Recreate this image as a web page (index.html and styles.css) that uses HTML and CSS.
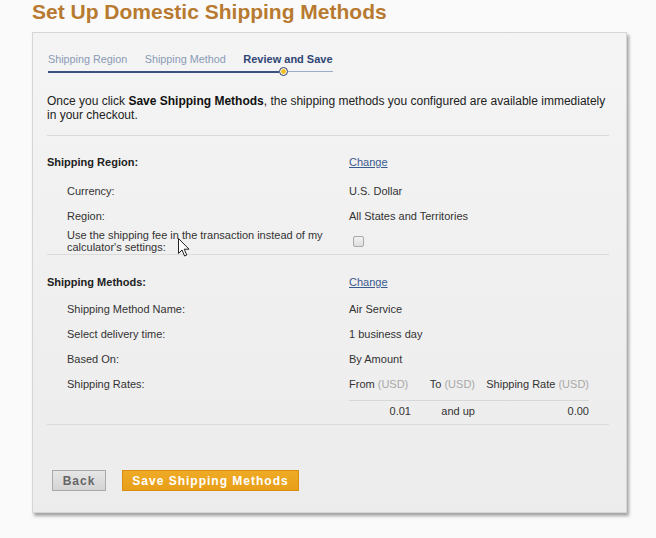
FILE: index.html
```html
<!DOCTYPE html>
<html>
<head>
<meta charset="utf-8">
<link rel="stylesheet" href="styles.css">
</head>
<body>
<h1 class="title">Set Up Domestic Shipping Methods</h1>
<div class="panel">
  <div class="steps">
    <div class="step-labels">
      <span class="step">Shipping Region</span>
      <span class="step">Shipping Method</span>
      <span class="step active">Review and Save</span>
    </div>
    <div class="progress"><span class="bar-done"></span><span class="dot"></span><span class="bar-todo"></span></div>
  </div>
  <p class="intro">Once you click <b>Save Shipping Methods</b>, the shipping methods you configured are available immediately in your checkout.</p>

  <section class="group">
    <div class="kv head"><span class="k">Shipping Region:</span><a class="v link" href="#">Change</a></div>
    <div class="kv row"><span class="k">Currency:</span><span class="v">U.S. Dollar</span></div>
    <div class="kv row"><span class="k">Region:</span><span class="v">All States and Territories</span></div>
    <div class="kv row-check"><span class="k">Use the shipping fee in the transaction instead of my calculator's settings:</span><span class="v"><span class="checkbox"></span></span></div>
  </section>

  <section class="group group-2">
    <div class="kv head"><span class="k">Shipping Methods:</span><a class="v link" href="#">Change</a></div>
    <div class="kv row"><span class="k">Shipping Method Name:</span><span class="v">Air Service</span></div>
    <div class="kv row"><span class="k">Select delivery time:</span><span class="v">1 business day</span></div>
    <div class="kv row"><span class="k">Based On:</span><span class="v">By Amount</span></div>
    <div class="kv row-rates"><span class="k">Shipping Rates:</span>
      <div class="v rates">
        <span class="th">From <em>(USD)</em></span>
        <span class="th">To <em>(USD)</em></span>
        <span class="th">Shipping Rate <em>(USD)</em></span>
        <span class="td">0.01</span>
        <span class="td">and up</span>
        <span class="td">0.00</span>
      </div>
    </div>
  </section>

  <div class="actions">
    <button class="btn btn-back">Back</button>
    <button class="btn btn-save">Save Shipping Methods</button>
  </div>
</div>

<svg class="cursor" width="13" height="20" viewBox="0 0 13 20"><path d="M0.5 0.5 L0.5 15.5 L4 12 L6.6 18 L8.8 17 L6.2 11.2 L11 11.2 Z" fill="#fff" stroke="#222" stroke-width="1" stroke-linejoin="round"/></svg>
</body>
</html>
```

FILE: styles.css
```css
* { box-sizing: border-box; }
html, body { margin: 0; padding: 0; }
body {
  background: #fafafa;
  font-family: "Liberation Sans", Arial, sans-serif;
  color: #333;
  width: 656px;
  height: 538px;
  overflow: hidden;
  position: relative;
}
.title {
  margin: 0 0 8px 32px;
  font-size: 21px;
  line-height: 24px;
  font-weight: bold;
  color: #b77a30;
}
.panel {
  margin-left: 32px;
  width: 595px;
  border: 1px solid #d6d6d6;
  background: linear-gradient(#f4f4f4, #ececec);
  padding: 19px 17px 21px 14px;
  box-shadow: 2px 3px 3px rgba(0,0,0,0.35);
  font-size: 11px;
}
.steps {
  display: flex;
  flex-direction: column;
  width: fit-content;
  margin-left: 1px;
}
.step-labels {
  display: flex;
  gap: 17.5px;
  font-size: 10.8px;
  line-height: 14px;
  color: #8a9bb6;
}
.step.active { color: #2e4675; font-weight: bold; font-size: 11px; }
.progress {
  display: flex;
  align-items: center;
  height: 9px;
  margin-top: 1px;
}
.bar-done { width: 231px; height: 2px; background: #3c5082; }
.dot {
  width: 9px; height: 9px;
  border: 1.5px solid #2b3f70;
  border-radius: 50%;
  background: radial-gradient(circle, #f1bf22 0 2px, #fdf6dc 2.6px);
}
.bar-todo { flex: 1; height: 1px; background: #9eaccb; }
.intro {
  margin: 18px 0 13px;
  font-size: 12px;
  line-height: 14px;
  color: #222;
}
.intro b { color: #111; }
.group { border-top: 1px solid #dadada; }
.kv {
  display: grid;
  grid-template-columns: 302px 1fr;
  font-size: 11px;
}
.head {
  padding-top: 19px;
  line-height: 14px;
  margin-bottom: 10px;
}
.group-2 .head { padding-top: 20px; margin-bottom: 8px; }
.head .k { font-weight: bold; color: #222; }
.link { color: #3b5a8e; text-decoration: underline; }
.row { line-height: 25px; }
.row .k, .row-check .k, .row-rates .k { padding-left: 20px; }
.row-check {
  padding: 0 0 1px;
  line-height: 12px;
  align-items: center;
}
.row-check .k { padding-right: 20px; }
.checkbox {
  display: block;
  width: 11px; height: 11px;
  margin-left: 4px;
  border: 1px solid #a9a9a9;
  border-radius: 2px;
  background: linear-gradient(#f2f2f2, #dedede);
}
.row-rates { line-height: 25px; padding-bottom: 3px; }
.rates {
  width: 240px;
  display: grid;
  grid-template-columns: 62px 64px 114px;
  text-align: right;
}
.th { padding-bottom: 3px; border-bottom: 1px solid #d8d8d8; white-space: nowrap; }
.th:first-child { padding-right: 3px; }
.th em { font-style: normal; color: #a8a8a8; }
.td { line-height: 20px; }
.actions {
  border-top: 1px solid #dadada;
  padding-top: 45px;
  display: flex;
  gap: 16px;
  padding-left: 5px;
}
.btn {
  font-family: "Liberation Sans", Arial, sans-serif;
  font-weight: bold;
  font-size: 12px;
  letter-spacing: 1px;
  height: 21px;
  padding: 0;
  cursor: pointer;
}
.btn-back {
  width: 54px;
  color: #666;
  background: linear-gradient(#e6e6e6, #d4d4d4);
  border: 1px solid #a9a9a9;
}
.btn-save {
  width: 177px;
  color: #fff;
  background: linear-gradient(#efab26, #e89e18);
  border: 1px solid #d98e10;
}
.cursor {
  position: absolute;
  left: 178px;
  top: 238px;
}
```
